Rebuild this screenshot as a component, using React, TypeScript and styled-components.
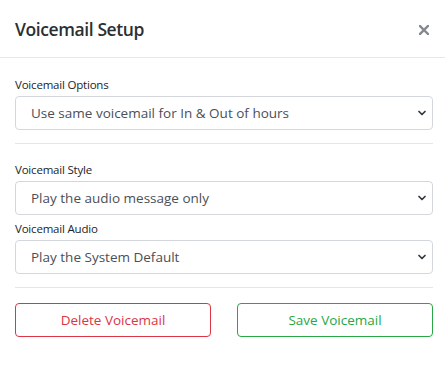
import styled, { createGlobalStyle } from 'styled-components';
import { ChevronDown } from 'lucide-react';

const GlobalStyle = createGlobalStyle`
  html, body {
    margin: 0;
    padding: 0;
    background: #ffffff;
  }
  body {
    font-family: 'Open Sans', 'Noto Sans', 'Liberation Sans', sans-serif;
    color: #212529;
  }
`;

const Modal = styled.div`
  width: 445px;
  height: 365px;
  background: #ffffff;
  border-radius: 4px;
  box-sizing: border-box;
  display: flex;
  flex-direction: column;
`;

const Header = styled.div`
  height: 58px;
  box-sizing: border-box;
  padding: 0 13px 0 15px;
  display: flex;
  align-items: center;
  justify-content: space-between;
  border-bottom: 1px solid #e6e8ea;
`;

const Title = styled.h5`
  margin: 0;
  font-size: 17.5px;
  font-weight: 600;
  letter-spacing: -0.4px;
  color: #2b2f33;
`;

const CloseButton = styled.button`
  border: none;
  background: transparent;
  padding: 0;
  width: 16px;
  height: 16px;
  display: flex;
  align-items: center;
  justify-content: center;
  cursor: pointer;
  margin-top: 2px;
`;

const Body = styled.div`
  padding: 20px 12px 0 15px;
  display: flex;
  flex-direction: column;
`;

const Field = styled.div`
  display: flex;
  flex-direction: column;
  gap: 4px;
  margin-bottom: ${({ $gap }: { $gap?: number }) => $gap ?? 0}px;
`;

const Label = styled.label`
  font-size: 11.5px;
  line-height: 14px;
  color: #212529;
  letter-spacing: -0.2px;
`;

const SelectWrap = styled.div`
  position: relative;
  height: 34px;
`;

const Select = styled.select`
  appearance: none;
  width: 100%;
  height: 34px;
  box-sizing: border-box;
  border: 1px solid #d3d7dc;
  border-radius: 4px;
  background: #ffffff;
  padding: 0 30px 0 15px;
  font-family: inherit;
  font-size: 13.5px;
  color: #495057;
  letter-spacing: 0;
  outline: none;
`;

const Chevron = styled.span`
  position: absolute;
  right: 5px;
  top: 11px;
  display: flex;
  color: #343a40;
  pointer-events: none;
`;

const Divider = styled.hr`
  border: none;
  border-top: 1px solid #e3e5e8;
  margin: ${({ $top, $bottom }: { $top: number; $bottom: number }) =>
    `${$top}px 0 ${$bottom}px`};
`;

const Actions = styled.div`
  display: grid;
  grid-template-columns: 196px 196px;
  justify-content: space-between;
`;

const OutlineButton = styled.button<{ $color: string }>`
  height: 34px;
  border-radius: 4px;
  background: #ffffff;
  border: 1px solid ${({ $color }) => $color};
  color: ${({ $color }) => $color};
  font-family: inherit;
  font-size: 13.5px;
  cursor: pointer;
`;

type SelectFieldProps = { label: string; value: string };

const SelectField = ({ label, value, gap }: SelectFieldProps & { gap?: number }) => (
  <Field $gap={gap}>
    <Label>{label}</Label>
    <SelectWrap>
      <Select defaultValue={value}>
        <option>{value}</option>
      </Select>
      <Chevron>
        <ChevronDown size={12} strokeWidth={3.5} />
      </Chevron>
    </SelectWrap>
  </Field>
);

const App = () => {
  return (
    <>
      <GlobalStyle />
      <Modal>
        <Header>
          <Title>Voicemail Setup</Title>
          <CloseButton aria-label="Close">
            <svg width="10" height="10" viewBox="0 0 10 10">
              <path d="M1 1L9 9M9 1L1 9" stroke="#85888c" strokeWidth="2.4" strokeLinecap="square" />
            </svg>
          </CloseButton>
        </Header>
        <Body>
          <SelectField label="Voicemail Options" value="Use same voicemail for In & Out of hours" />
          <Divider $top={13} $bottom={19} />
          <SelectField label="Voicemail Style" value="Play the audio message only" gap={7} />
          <SelectField label="Voicemail Audio" value="Play the System Default" />
          <Divider $top={13} $bottom={15} />
          <Actions>
            <OutlineButton $color="#dc3545">Delete Voicemail</OutlineButton>
            <OutlineButton $color="#28a745">Save Voicemail</OutlineButton>
          </Actions>
        </Body>
      </Modal>
    </>
  );
};

export default App;
